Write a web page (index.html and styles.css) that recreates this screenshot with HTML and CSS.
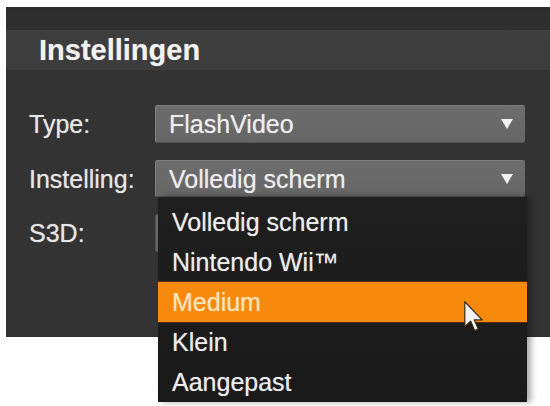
FILE: index.html
```html
<!DOCTYPE html>
<html lang="nl">
<head>
<meta charset="utf-8">
<title>Instellingen</title>
<link rel="stylesheet" href="styles.css">
</head>
<body>
<div class="panel">
  <div class="header"><span class="title">Instellingen</span></div>
  <div class="rows">
    <div class="row">
      <span class="label">Type:</span>
      <div class="select"><span class="value">FlashVideo</span><span class="arrow"></span></div>
    </div>
    <div class="row row-open">
      <span class="label">Instelling:</span>
      <div class="select"><span class="value">Volledig scherm</span><span class="arrow"></span></div>
      <ul class="dropdown">
        <li class="item">Volledig scherm</li>
        <li class="item">Nintendo Wii™</li>
        <li class="item active">Medium</li>
        <li class="item">Klein</li>
        <li class="item">Aangepast</li>
      </ul>
      <svg class="cursor" width="19" height="31" viewBox="0 0 12.5 20.5">
        <path d="M0.5 0.5 L0.5 17 L4.4 13.3 L7 19.6 L9.4 18.6 L6.8 12.5 L12 12.5 Z" fill="#f4f4f4" stroke="#3a2a1a" stroke-width="0.8" stroke-linejoin="round"/>
      </svg>
    </div>
    <div class="row row-s3d">
      <span class="label">S3D:</span>
      <div class="select"></div>
    </div>
  </div>
</div>
</body>
</html>
```
FILE: styles.css
```css
html, body {
  margin: 0;
  padding: 0;
  background: #ffffff;
}
body {
  width: 550px;
  height: 406px;
  overflow: hidden;
  font-family: "Liberation Sans", Arial, sans-serif;
}
.panel {
  margin: 7px 0 0 6px;
  width: 544px;
  height: 330px;
  background: #333333;
  box-sizing: border-box;
}
.header {
  height: 63px;
  padding: 23px 0 0 33px;
  box-sizing: border-box;
  background: linear-gradient(#2c2c2c 0, #2f2f2f 23px, #3e3e3e 23px, #3c3c3c 63px);
}
.title {
  display: block;
  font-size: 29px;
  font-weight: bold;
  line-height: 40px;
  color: #f2f2f2;
  text-shadow: 0 0 1px rgba(255, 255, 255, 0.4);
}
.rows {
  display: flex;
  flex-direction: column;
  gap: 17px;
  padding: 35px 0 0 23px;
}
.row {
  position: relative;
  display: flex;
  align-items: center;
  height: 38px;
}
.row-open {
  height: 37px;
}
.label {
  width: 126px;
  font-size: 25px;
  line-height: 38px;
  color: #e6e6e6;
  text-shadow: 0 0 1px rgba(255, 255, 255, 0.5);
}
.select {
  position: relative;
  width: 370px;
  height: 100%;
  box-sizing: border-box;
  border-radius: 2px;
  border-top: 1px solid #7c7c7c;
  border-left: 1px solid #808080;
  border-bottom: 1px solid #555555;
  background: linear-gradient(#6d6d6d, #666666);
  display: flex;
  align-items: center;
  padding-left: 13px;
}
.value {
  font-size: 25px;
  color: #ededed;
  line-height: 36px;
  text-shadow: 0 0 1px rgba(255, 255, 255, 0.5);
}
.arrow {
  position: absolute;
  right: 12px;
  top: 50%;
  margin-top: -5px;
  width: 0;
  height: 0;
  border-left: 6px solid transparent;
  border-right: 6px solid transparent;
  border-top: 10px solid #f0f0f0;
}
.dropdown {
  position: absolute;
  left: 129px;
  top: 37px;
  z-index: 2;
  width: 369px;
  margin: 0;
  padding: 5px 0 0 0;
  list-style: none;
  background: linear-gradient(#1f1f1f, #191919);
  box-shadow: 4px 0 6px rgba(0, 0, 0, 0.35);
}
.item {
  height: 40px;
  line-height: 40px;
  padding-left: 14px;
  font-size: 25px;
  color: #ececec;
  text-shadow: 0 0 1px rgba(255, 255, 255, 0.5);
}
.item.active {
  background: #f78a0d;
  color: #fbe4b6;
  box-shadow: 0 -1px 0 #5a2e08, 0 1px 0 #5a2e08;
}
.cursor {
  position: absolute;
  left: 435px;
  top: 141px;
  z-index: 3;
}
.row-s3d .select {
  border: 1px solid #555555;
}
```
